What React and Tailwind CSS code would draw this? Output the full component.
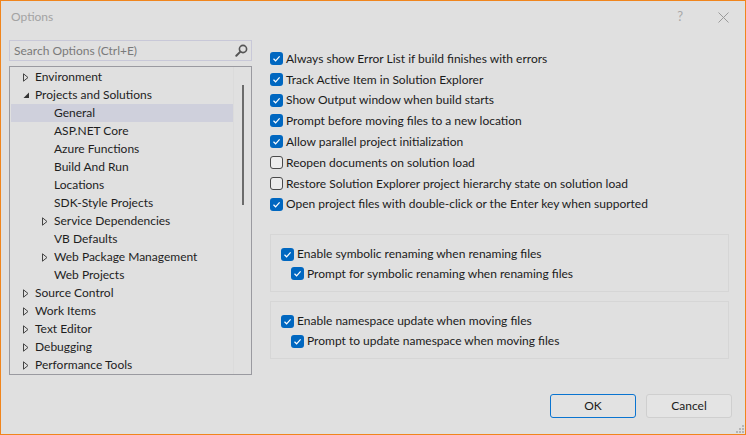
import React from "react";

const font = { fontFamily: 'Lato, "Noto Sans", sans-serif' };

function Check({ checked = true }) {
  if (!checked) {
    return (
      <span className="inline-flex h-[13px] w-[13px] shrink-0 rounded-[3px] border border-[#4a4a4a] bg-[#ececec]" />
    );
  }
  return (
    <span className="inline-flex h-[13px] w-[13px] shrink-0 items-center justify-center rounded-[3px] bg-[#0067c0]">
      <svg width="9" height="9" viewBox="0 0 9 9">
        <path d="M1.5 4.8 L3.6 6.8 L7.6 2.4" fill="none" stroke="#fff" strokeWidth="1.2" />
      </svg>
    </span>
  );
}

function Row({ checked = true, children, h = "h-[21px]" }) {
  return (
    <div className={`flex items-center gap-[3px] ${h}`}>
      <Check checked={checked} />
      <span className="whitespace-nowrap text-[12px] text-[#1b1b1b]">{children}</span>
    </div>
  );
}

function Collapsed() {
  return (
    <svg width="6" height="9" viewBox="0 0 6 9">
      <path d="M0.5 0.8 L5 4.5 L0.5 8.2 Z" fill="none" stroke="#444" strokeWidth="1" />
    </svg>
  );
}

function Expanded() {
  return (
    <svg width="7" height="7" viewBox="0 0 7 7">
      <path d="M6 0.5 L6 6 L0.5 6 Z" fill="#333" />
    </svg>
  );
}

function TreeItem({ level = 0, arrow, label, selected }) {
  return (
    <div className={`flex h-[18px] items-center ${selected ? "bg-[#cfd0dc]" : ""}`}>
      <div className={level === 0 ? "w-[12px] shrink-0" : "w-[31px] shrink-0"} />
      <div className="flex w-[12px] shrink-0 items-center">
        {arrow === "c" && <Collapsed />}
        {arrow === "e" && <Expanded />}
      </div>
      <span className="whitespace-nowrap text-[12px] text-[#1e1e1e]">{label}</span>
    </div>
  );
}

export default function App() {
  const tree = [
    [0, "c", "Environment"],
    [0, "e", "Projects and Solutions"],
    [1, null, "General", true],
    [1, null, "ASP.NET Core"],
    [1, null, "Azure Functions"],
    [1, null, "Build And Run"],
    [1, null, "Locations"],
    [1, null, "SDK-Style Projects"],
    [1, "c", "Service Dependencies"],
    [1, null, "VB Defaults"],
    [1, "c", "Web Package Management"],
    [1, null, "Web Projects"],
    [0, "c", "Source Control"],
    [0, "c", "Work Items"],
    [0, "c", "Text Editor"],
    [0, "c", "Debugging"],
    [0, "c", "Performance Tools"],
  ];
  return (
    <div
      style={font}
      className="relative flex h-[435px] w-[746px] flex-col overflow-hidden border border-[#f0851d] bg-[#e0e0e0]"
    >
      {/* title bar */}
      <div className="flex h-[39px] shrink-0 items-start">
        <span className="ml-[10px] mt-[7px] text-[12px] text-[#a3a3a3]">Options</span>
        <div className="flex-1" />
        <span className="mt-[6px] text-[13px] text-[#a8a8a8]">?</span>
        <svg className="ml-[35px] mr-[16px] mt-[11px]" width="11" height="11" viewBox="0 0 11 11">
          <path d="M0.5 0.5 L10.5 10.5 M10.5 0.5 L0.5 10.5" stroke="#9a9a9a" strokeWidth="1" />
        </svg>
      </div>

      <div className="flex flex-1">
        {/* left */}
        <div className="ml-[8px] flex w-[243px] shrink-0 flex-col">
          <div className="flex h-[21px] items-center border border-[#c8c8d8] pl-[4px] pr-[3px]">
            <span className="flex-1 text-[12px] text-[#7a7a7a]">Search Options (Ctrl+E)</span>
            <svg width="13" height="13" viewBox="0 0 13 13">
              <circle cx="8" cy="5" r="3.6" fill="none" stroke="#555" strokeWidth="1.6" />
              <path d="M5.4 7.6 L1.3 11.7" stroke="#555" strokeWidth="2" strokeLinecap="round" />
            </svg>
          </div>
          <div className="mt-[5px] flex h-[309px] border border-[#9a9aa0]">
            <div className="flex flex-1 flex-col pl-[1px] pt-[1px]">
              {tree.map(([lvl, arrow, label, sel]) => (
                <TreeItem key={label} level={lvl} arrow={arrow} label={label} selected={sel} />
              ))}
            </div>
            <div className="flex w-[18px] shrink-0 justify-center border-l border-[#dbdbdb] pt-[18px]">
              <div className="h-[120px] w-[2px] bg-[#6b6b6b]" />
            </div>
          </div>
        </div>

        {/* right */}
        <div className="ml-[18px] flex w-[459px] flex-col pt-[8px]">
          <Row>Always show Error List if build finishes with errors</Row>
          <Row>Track Active Item in Solution Explorer</Row>
          <Row h="h-[20px]">Show Output window when build starts</Row>
          <Row>Prompt before moving files to a new location</Row>
          <Row>Allow parallel project initialization</Row>
          <Row checked={false}>Reopen documents on solution load</Row>
          <Row checked={false}>Restore Solution Explorer project hierarchy state on solution load</Row>
          <Row h="h-[20px]">Open project files with double-click or the Enter key when supported</Row>

          <div className="mt-[20px] flex h-[58px] flex-col border border-[#d6d6d6] pl-[10px] pt-[9px]">
            <Row h="h-[20px]">Enable symbolic renaming when renaming files</Row>
            <div className="pl-[10px]">
              <Row h="h-[19px]">Prompt for symbolic renaming when renaming files</Row>
            </div>
          </div>
          <div className="mt-[9px] flex h-[58px] flex-col border border-[#d6d6d6] pl-[10px] pt-[9px]">
            <Row h="h-[20px]">Enable namespace update when moving files</Row>
            <div className="pl-[10px]">
              <Row h="h-[20px]">Prompt to update namespace when moving files</Row>
            </div>
          </div>
        </div>
      </div>

      {/* footer */}
      <div className="flex h-[40px] shrink-0 items-start justify-end gap-[10px] pr-[13px]">
        <button className="h-[24px] w-[86px] rounded-[3px] border border-[#0a74d0] bg-[#e2e2e2] text-[12px] text-[#1b1b1b]">
          OK
        </button>
        <button className="h-[24px] w-[86px] rounded-[3px] border border-[#cfcfcf] bg-[#e4e4e4] text-[12px] text-[#1b1b1b]">
          Cancel
        </button>
      </div>

      {/* resize grip */}
      <svg className="absolute bottom-[1px] right-[1px]" width="9" height="9" viewBox="0 0 9 9">
        <rect x="7" y="1" width="2" height="2" fill="#b5b5b5" />
        <rect x="4" y="4" width="2" height="2" fill="#b5b5b5" />
        <rect x="7" y="4" width="2" height="2" fill="#b5b5b5" />
        <rect x="1" y="7" width="2" height="2" fill="#b5b5b5" />
        <rect x="4" y="7" width="2" height="2" fill="#b5b5b5" />
        <rect x="7" y="7" width="2" height="2" fill="#b5b5b5" />
      </svg>
    </div>
  );
}
